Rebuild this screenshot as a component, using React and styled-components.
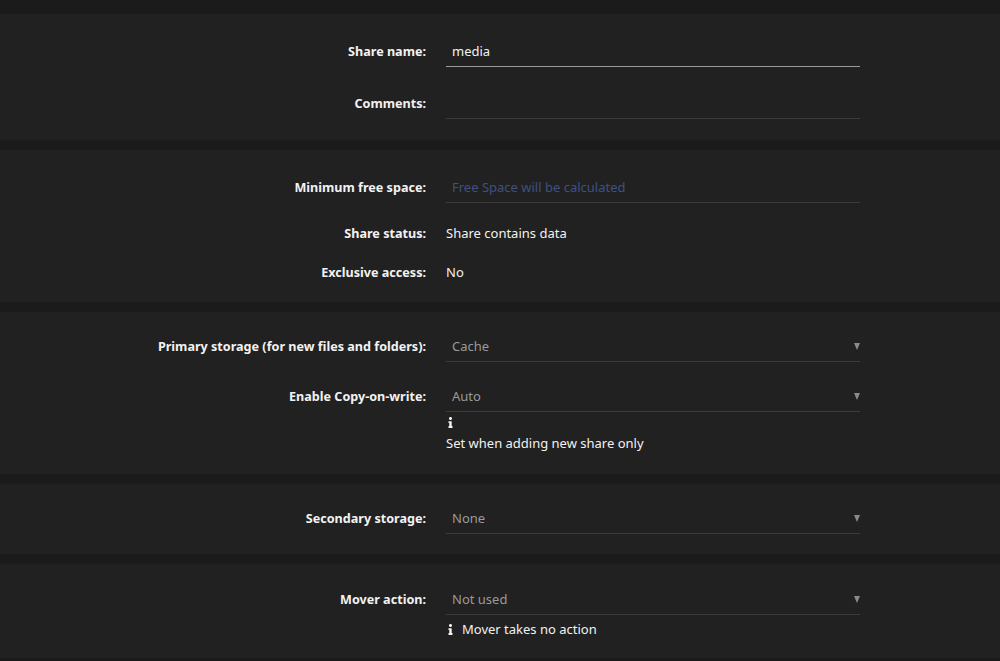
import React from "react";
import styled, { createGlobalStyle } from "styled-components";
import { FaInfo } from "react-icons/fa";

const GlobalStyle = createGlobalStyle`
  html, body {
    margin: 0;
    padding: 0;
    background: #1c1b1b;
    font-family: "Noto Sans", "Open Sans", sans-serif;
    color: #f2f2f2;
  }
`;

const Page = styled.div`
  display: flex;
  flex-direction: column;
  gap: 10px;
  padding-top: 14px;
  min-height: 661px;
  box-sizing: border-box;
`;

const Section = styled.section`
  background: #212121;
  padding: ${props => props.pad || "20px 0"};
  display: flex;
  flex-direction: column;
`;

const Row = styled.div`
  display: grid;
  grid-template-columns: 426px 414px;
  column-gap: 20px;
  align-items: start;
  margin-top: ${props => props.space || 0}px;
`;

const Label = styled.div`
  text-align: right;
  font-weight: 700;
  font-size: 12.6px;
  height: 30px;
  line-height: 32px;
  color: #f2f2f2;
`;

const Field = styled.div`
  display: flex;
  align-items: center;
  justify-content: space-between;
  height: 30px;
  padding: 0 6px;
  border-bottom: 1px solid ${props => (props.active ? "#9a9a9a" : "#3c3c3c")};
  font-size: 13px;
  color: ${props => props.muted ? "#9a9a9a" : props.placeholder ? "#3e5182" : "#f2f2f2"};
`;

const Value = styled.div`
  font-size: 13px;
  line-height: 30px;
  color: #f2f2f2;
`;

const Arrow = styled.span`
  width: 0;
  height: 0;
  border-left: 3.5px solid transparent;
  border-right: 3.5px solid transparent;
  border-top: 7px solid #8a8a8a;
  margin-right: -6px;
`;

const Help = styled.div`
  display: flex;
  flex-direction: ${props => (props.inline ? "row" : "column")};
  align-items: ${props => (props.inline ? "center" : "flex-start")};
  gap: 6px;
  padding-top: 5px;
  font-size: 13px;
  line-height: 18px;
  color: #f2f2f2;

  svg {
    font-size: 11px;
    margin-left: -1px;
    flex-shrink: 0;
  }
`;

const Select = ({ value }) => (
  <Field muted>
    <span>{value}</span>
    <Arrow />
  </Field>
);

export default function App() {
  return (
    <>
      <GlobalStyle />
      <Page>
        <Section pad="22px 0 21px">
          <Row>
            <Label>Share name:</Label>
            <Field active>media</Field>
          </Row>
          <Row space={21}>
            <Label>Comments:</Label>
            <Field />
          </Row>
        </Section>

        <Section pad="22px 0 15px">
          <Row>
            <Label>Minimum free space:</Label>
            <Field placeholder="true">Free Space will be calculated</Field>
          </Row>
          <Row space={15}>
            <Label>Share status:</Label>
            <Value>Share contains data</Value>
          </Row>
          <Row space={9}>
            <Label>Exclusive access:</Label>
            <Value>No</Value>
          </Row>
        </Section>

        <Section pad="19px 0 22px">
          <Row>
            <Label>Primary storage (for new files and folders):</Label>
            <Select value="Cache" />
          </Row>
          <Row space={19}>
            <Label>Enable Copy-on-write:</Label>
            <div>
              <Select value="Auto" />
              <Help>
                <FaInfo />
                <span>Set when adding new share only</span>
              </Help>
            </div>
          </Row>
        </Section>

        <Section pad="19px 0 20px">
          <Row>
            <Label>Secondary storage:</Label>
            <Select value="None" />
          </Row>
        </Section>

        <Section pad="20px 0 20px">
          <Row>
            <Label>Mover action:</Label>
            <div>
              <Select value="Not used" />
              <Help inline>
                <FaInfo />
                <span>Mover takes no action</span>
              </Help>
            </div>
          </Row>
        </Section>
      </Page>
    </>
  );
}
